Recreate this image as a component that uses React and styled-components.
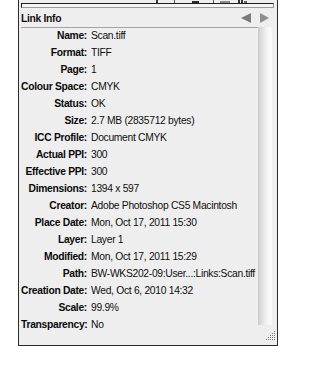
import React from "react";
import styled, { createGlobalStyle } from "styled-components";

const Global = createGlobalStyle`
  html, body { margin: 0; padding: 0; background: #ffffff; }
  body { font-family: "Liberation Sans", Arial, sans-serif; overflow: hidden; }
`;

const Panel = styled.div`
  box-sizing: border-box;
  margin: -10px 0 0 18px;
  width: 260px;
  background: #eeeeee;
  border: 1px solid #2b2b2b;
  border-top: none;
  padding: 0 3px 0 2px;
  display: flex;
  flex-direction: column;
`;

const Toolbar = styled.div`
  height: 13px;
  display: flex;
  align-items: flex-end;
  padding-left: 134px;
`;

const ToolIcon = styled.svg`
  display: block;
  flex: none;
  margin-right: ${(p) => p.$gap || 0}px;
`;

const FieldBar = styled.div`
  box-sizing: border-box;
  height: 5px;
  border-top: 1px solid #1e1e1e;
  border-left: 1px solid #1e1e1e;
  border-right: 1px solid #9a9a9a;
  border-bottom: 1px solid #9a9a9a;
  background: #f4f4f4;
`;

const Header = styled.div`
  height: 19px;
  display: flex;
  align-items: center;
  justify-content: space-between;
`;

const Title = styled.span`
  font-weight: bold;
  font-size: 10.3px;
  letter-spacing: -0.3px;
  color: #111;
  padding-top: 1px;
`;

const Arrows = styled.div`
  display: flex;
  gap: 9px;
  padding-right: 5px;
  padding-top: 1px;
`;

const Body = styled.div`
  display: grid;
  grid-template-columns: 237px 14px;
  height: 318px;
`;

const List = styled.div`
  border-top: 1px solid #a3a3a3;
  display: flex;
  flex-direction: column;
  margin-top: 0;
`;

const Row = styled.div`
  display: grid;
  grid-template-columns: 66px 1fr;
  column-gap: 4px;
  height: 17px;
  line-height: 16px;
  font-size: 10.3px;
  letter-spacing: -0.3px;
  white-space: nowrap;
`;

const Label = styled.span`
  font-weight: bold;
  text-align: right;
  color: #0a0a0a;
`;

const Value = styled.span`
  color: #0e0e0e;
  overflow: hidden;
`;

const Side = styled.div`
  display: flex;
  flex-direction: column;
`;

const Scrollbar = styled.div`
  height: 298px;
  background: linear-gradient(
    to right,
    #cbcbcb 0%,
    #dedede 25%,
    #efefef 55%,
    #fbfbfb 85%,
    #f6f6f6 100%
  );
`;

const GripArea = styled.div`
  flex: 1;
  display: flex;
  justify-content: flex-end;
  align-items: flex-end;
  margin-right: -3px;
  padding-bottom: 5px;
`;

const rows = [
  ["Name:", "Scan.tiff"],
  ["Format:", "TIFF"],
  ["Page:", "1"],
  ["Colour Space:", "CMYK"],
  ["Status:", "OK"],
  ["Size:", "2.7 MB (2835712 bytes)"],
  ["ICC Profile:", "Document CMYK"],
  ["Actual PPI:", "300"],
  ["Effective PPI:", "300"],
  ["Dimensions:", "1394 x 597"],
  ["Creator:", "Adobe Photoshop CS5 Macintosh"],
  ["Place Date:", "Mon, Oct 17, 2011 15:30"],
  ["Layer:", "Layer 1"],
  ["Modified:", "Mon, Oct 17, 2011 15:29"],
  ["Path:", "BW-WKS202-09:User...:Links:Scan.tiff"],
  ["Creation Date:", "Wed, Oct 6, 2010 14:32"],
  ["Scale:", "99.9%"],
  ["Transparency:", "No"],
];

function Grip() {
  const dots = [];
  for (let r = 0; r < 5; r++) {
    for (let c = 4 - r; c < 5; c++) {
      dots.push(<rect key={`${r}-${c}`} x={c * 2} y={r * 2} width="1" height="1" fill="#7c7c7c" />);
    }
  }
  return (
    <svg width="9" height="9" viewBox="0 0 9 9">
      {dots}
    </svg>
  );
}

export default function App() {
  return (
    <>
      <Global />
      <Panel>
        <Toolbar>
          <ToolIcon width="4" height="3" $gap={15}>
            <rect x="1" y="0" width="2" height="3" fill="#3a3a3a" />
          </ToolIcon>
          <ToolIcon width="2" height="3" $gap={16}>
            <rect x="0" y="0" width="1" height="3" fill="#555" />
          </ToolIcon>
          <ToolIcon width="7" height="3" $gap={14}>
            <rect x="0" y="1" width="7" height="2" fill="#2a2a2a" />
          </ToolIcon>
          <ToolIcon width="2" height="3" $gap={5}>
            <rect x="0" y="0" width="1" height="3" fill="#555" />
          </ToolIcon>
          <ToolIcon width="10" height="3" $gap={8}>
            <rect x="0" y="1" width="10" height="2" fill="#8a8a8a" />
          </ToolIcon>
          <ToolIcon width="9" height="3">
            <rect x="0" y="0" width="2" height="3" fill="#333" />
            <rect x="3" y="0" width="2" height="3" fill="#333" />
            <rect x="6" y="1" width="3" height="2" fill="#666" />
          </ToolIcon>
        </Toolbar>
        <FieldBar />
        <Header>
          <Title>Link Info</Title>
          <Arrows>
            <svg width="10" height="10" viewBox="0 0 10 10">
              <polygon points="10,0 10,10 0,5" fill="#7b7b7b" />
            </svg>
            <svg width="9" height="10" viewBox="0 0 9 10">
              <polygon points="0,0 0,10 9,5" fill="#8e8e8e" />
            </svg>
          </Arrows>
        </Header>
        <Body>
          <List>
            {rows.map(([l, v]) => (
              <Row key={l}>
                <Label>{l}</Label>
                <Value>{v}</Value>
              </Row>
            ))}
          </List>
          <Side>
            <Scrollbar />
            <GripArea>
              <Grip />
            </GripArea>
          </Side>
        </Body>
      </Panel>
    </>
  );
}
